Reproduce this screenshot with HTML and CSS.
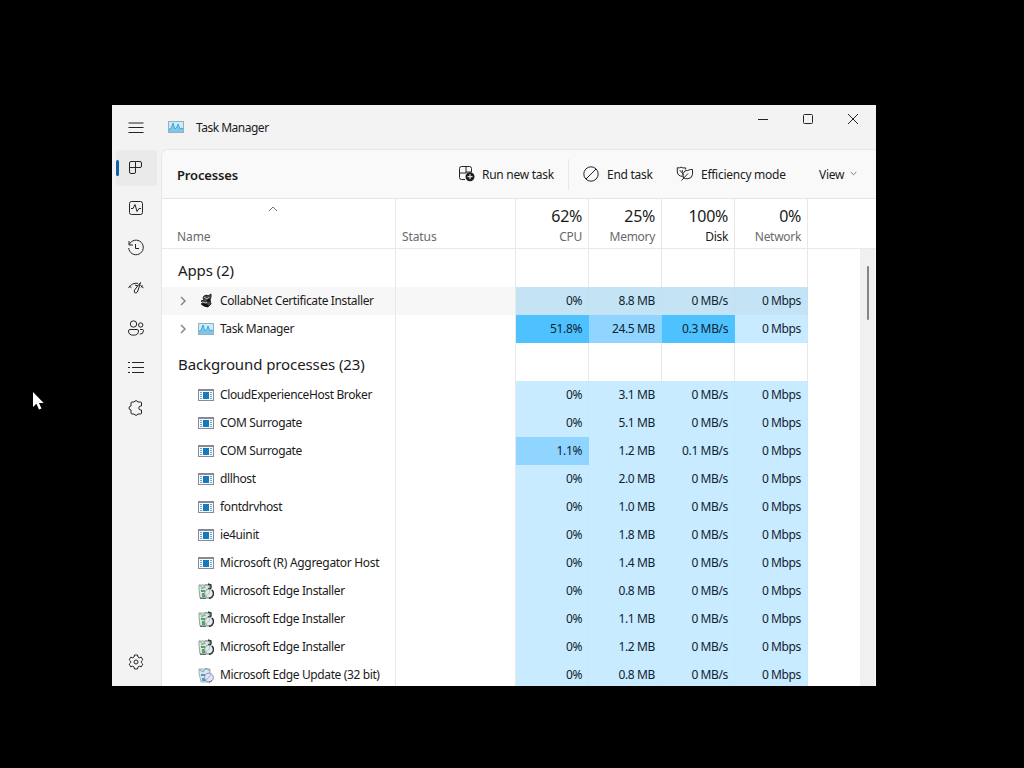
FILE: index.html
```html
<!DOCTYPE html>
<html lang="en">
<head>
<meta charset="utf-8">
<title>Task Manager</title>
<link rel="stylesheet" href="styles.css">
</head>
<body>
<svg class="defs" width="0" height="0" aria-hidden="true">
  <symbol id="tm" viewBox="0 0 16 14">
    <rect x=".5" y="1.5" width="15" height="11" fill="#c9edfc" stroke="#9aafba"/>
    <path d="M1 12V9l2-1 2-5 2 6 2-2 1-3 2 5 2-1 1 1v3z" fill="#7cc8ed"/>
    <path d="M1 9.500l2-1L5 3l2 6 2-2 1-3 2 5 2-1 1 1" fill="none" stroke="#3698cd" stroke-width=".8"/>
  </symbol>
  <symbol id="exe" viewBox="0 0 16 12">
    <path d="M0 0h16v12H0z" fill="#858b90"/><path d="M1 2h14v9H1z" fill="#f4fafd"/>
    <path d="M5 3h6v7H5z" fill="#1879b9"/>
    <path d="M2 3.500h2M2 5.500h2M2 7.500h2M2 9.500h2M12 3.500h2M12 5.500h2M12 7.500h2M12 9.500h2" stroke="#69a4cb"/>
  </symbol>
  <symbol id="inst" viewBox="0 0 16 16">
    <path d="M1 2h11v3l-1 10H2L1 6z" fill="#dce7e4" stroke="#7f908a" stroke-width=".8"/>
    <path d="M1 2l4 3 3-4 4 3M3 6l5-2" fill="none" stroke="#87a99a"/>
    <path d="M3 7h4v2H3zM4 10h3v4H4z" fill="#4da65e"/>
    <path d="M10 1l3 1v3l-3 1" fill="none" stroke="#26352f" stroke-width="1.400"/>
    <circle cx="11" cy="10.500" r="4.300" fill="#e5e8ef" stroke="#8c969a"/>
    <path d="M14 7a5 5 0 0 1-3 8.500" fill="none" stroke="#26312e" stroke-width="1.300"/>
    <path d="M8 13l3-3 1-3" fill="none" stroke="#b8c9c0"/><path d="M2 15.300h6" stroke="#46544e"/>
  </symbol>
  <symbol id="upd" viewBox="0 0 16 16">
    <path d="M1 2h11v3l-1 10H3L1 6z" fill="#d7e5f0" stroke="#8da2b4" stroke-width=".8"/>
    <path d="M1 2l4 3 3-4 4 3" fill="none" stroke="#7c9fb0"/>
    <path d="M3 7h4v2H3zM4 11h4v3H4z" fill="#4b9ac1"/>
    <circle cx="11" cy="10.500" r="4.400" fill="#dfe5f5" stroke="#8b93b4"/>
    <path d="M8 13l3-3 2-3" fill="none" stroke="#a0add2"/><path d="M14 13.500l-3 2" stroke="#616a82"/>
  </symbol>
  <symbol id="chev" viewBox="0 0 8 10"><path d="M2 1l4 4-4 4" fill="none" stroke="#888" stroke-width="1.500"/></symbol>
</svg>
<div class="window">
  <nav class="rail">
    <div class="nav"><svg width="16" height="12" viewBox="0 0 16 12"><path d="M.5 1h15M.5 5.500h15M.5 10.500h15"/></svg></div>
    <div class="nav active"><svg width="16" height="16" viewBox="0 0 16 16"><path d="M7.500 1.500H3A1.500 1.500 0 0 0 1.500 3v9A1.500 1.500 0 0 0 3 13.500h3A1.500 1.500 0 0 0 7.500 12zM1.500 7.500H12A1.500 1.500 0 0 0 13.500 6V3A1.500 1.500 0 0 0 12 1.500H7.500"/></svg></div>
    <div class="nav"><svg width="16" height="16" viewBox="0 0 16 16"><rect x="1.500" y="1.500" width="13" height="13" rx="2"/><path d="M3 8.500h2l2-4 2 7 2-3h2"/></svg></div>
    <div class="nav"><svg width="18" height="18" viewBox="0 0 18 18"><path d="M2 2v4h4M2.300 5.500A7.300 7.300 0 1 1 1.700 9M8.500 5v4.500H12"/></svg></div>
    <div class="nav"><svg width="18" height="16" viewBox="0 0 18 16"><path d="M1.500 8Q5 2.500 11 3.300M2.500 6.200l2 1.600M13.500 5l3 3.200M15.500 5.500l-1.500 2M13.500 2.500L7.500 10q-1 3 1.300 3 1.300 0 2-2zM8 5l3 1"/></svg></div>
    <div class="nav"><svg width="18" height="18" viewBox="0 0 18 18"><circle cx="6.500" cy="5" r="3.200"/><circle cx="13.700" cy="6" r="2.200"/><path d="M3 10.500h7a1.500 1.500 0 0 1 1.500 1.500q0 4.200-5 4.200t-5-4.200A1.500 1.500 0 0 1 3 10.500zM13 10.500h2.500a1 1 0 0 1 1 1q0 3.700-3.700 3.700"/></svg></div>
    <div class="nav"><svg width="18" height="14" viewBox="0 0 18 14"><path d="M5 1.500h12M5 6.500h12M5 11.500h12"/><path d="M1 1.500h2M1 6.500h2M1 11.500h2"/></svg></div>
    <div class="nav"><svg width="18" height="18" viewBox="0 0 18 18"><path d="M5 3h2.300a1.900 1.900 0 0 1 3.600 0h2.600a1 1 0 0 1 1 1v3h-.7a2 2 0 0 0 0 4h.7v3a1 1 0 0 1-1 1h-2.600a1.900 1.900 0 0 1-3.600 0H5a1 1 0 0 1-1-1v-3a2 2 0 0 1 0-4V4a1 1 0 0 1 1-1z" stroke-linejoin="round"/></svg></div>
    <div class="nav settings"><svg width="16" height="16" viewBox="0 0 16 16"><path d="M6.500 1h3l.5 2 1.300.8 2-.6 1.500 2.600L13.400 7.200v1.600l1.400 1.400-1.500 2.600-2-.6-1.300.8-.5 2h-3L6 13l-1.300-.8-2 .6-1.500-2.600 1.400-1.400V7.200L1.200 5.800l1.500-2.600 2 .6L6 3z" stroke-linejoin="round"/><circle cx="8" cy="8" r="2"/></svg></div>
  </nav>
  <div class="main">
    <header class="title">
      <svg width="16" height="14"><use href="#tm"/></svg><span class="t-title">Task Manager</span>
      <div class="controls">
        <svg width="12" height="12" viewBox="0 0 12 12"><path d="M1 6.500h10"/></svg>
        <svg width="12" height="12" viewBox="0 0 12 12"><rect x="1.500" y="1.500" width="9" height="9" rx="1"/></svg>
        <svg width="12" height="12" viewBox="0 0 12 12"><path d="M1 1l10 10M11 1L1 11"/></svg>
      </div>
    </header>
    <section class="panel">
      <div class="toolbar">
        <h1>Processes</h1>
        <button class="run"><svg width="18" height="18" viewBox="0 0 18 18"><path d="M7 14.500H3.500a2 2 0 0 1-2-2v-9a2 2 0 0 1 2-2h8a2 2 0 0 1 2 2V7M1.500 8H8M8 1.500V8M8 7h5.500"/><circle cx="12" cy="11.700" r="4.500" fill="#1c1c1c" stroke="none"/><path d="M9.500 11.700h5M12 9.200v5" stroke="#fff"/></svg><span>Run new task</span></button>
        <i class="sep"></i>
        <button class="end"><svg width="16" height="16" viewBox="0 0 16 16"><circle cx="8" cy="8" r="7.200"/><path d="M3 13L13 3"/></svg><span>End task</span></button>
        <button class="eff"><svg width="18" height="16" viewBox="0 0 18 16"><path d="M7 10.300Q1.800 10.500 1.300 6V1.700q2.200.7 3.700-.6 1.700 1.300 4.700.8v1.600M3.800 4.300l4 4.500M6.300 6.500V4M5.500 14.500L12 7.500M7.500 12Q5.300 7.500 9 4.800q2.500 0 4-.8 1.500-.8 3.500-.5v5q-.5 4-4.500 4.200-2.700.2-4.500-.7z"/></svg><span>Efficiency mode</span></button>
        <button class="view"><span>View</span><svg width="7" height="5" viewBox="0 0 7 5"><path d="M.7 1l2.800 2.700L6.300 1" stroke="#777"/></svg></button>
      </div>
      <div class="grid head">
        <div class="hname"><svg width="10" height="6" viewBox="0 0 10 6"><path d="M1 5l4-4 4 4"/></svg><span>Name</span></div>
        <div class="hstat">Status</div>
        <div class="h"><b>62%</b><span>CPU</span></div>
        <div class="h"><b>25%</b><span>Memory</span></div>
        <div class="h dark"><b>100%</b><span>Disk</span></div>
        <div class="h"><b>0%</b><span>Network</span></div>
      </div>
      <div class="body">
        <div class="rows">
          <div class="grid group"><div class="g">Apps (2)</div><div></div><div></div><div></div><div></div><div></div></div>
          <div class="grid row hover"><div class="n"><svg class="c" width="8" height="10"><use href="#chev"/></svg><svg class="ic" width="16" height="16" viewBox="0 0 16 16"><path d="M6 3l3-1 1 1 3-2v3l-1 3 1 4-3 3-4-1-3-2 2-1-2-2 3-1-1-2z" fill="#454b50"/><path d="M6 4l3 2 2-2M4 9l4 1 3-3" fill="none" stroke="#b2b8be"/><path d="M9 8l3-1M5 11l5 2" stroke="#090909" stroke-width="2"/></svg><span>CollabNet Certificate Installer</span></div><div></div><div class="v">0%</div><div class="v">8.8 MB</div><div class="v">0 MB/s</div><div class="v">0 Mbps</div></div>
          <div class="grid row"><div class="n"><svg class="c" width="8" height="10"><use href="#chev"/></svg><svg class="ic" width="16" height="14"><use href="#tm"/></svg><span>Task Manager</span></div><div></div><div class="v hi">51.8%</div><div class="v mid">24.5 MB</div><div class="v hi">0.3 MB/s</div><div class="v">0 Mbps</div></div>
          <div class="grid group"><div class="g bg">Background processes (23)</div><div></div><div></div><div></div><div></div><div></div></div>
          <div class="grid row"><div class="n"><i class="c"></i><svg class="ic" width="16" height="12"><use href="#exe"/></svg><span>CloudExperienceHost Broker</span></div><div></div><div class="v">0%</div><div class="v">3.1 MB</div><div class="v">0 MB/s</div><div class="v">0 Mbps</div></div>
          <div class="grid row"><div class="n"><i class="c"></i><svg class="ic" width="16" height="12"><use href="#exe"/></svg><span>COM Surrogate</span></div><div></div><div class="v">0%</div><div class="v">5.1 MB</div><div class="v">0 MB/s</div><div class="v">0 Mbps</div></div>
          <div class="grid row"><div class="n"><i class="c"></i><svg class="ic" width="16" height="12"><use href="#exe"/></svg><span>COM Surrogate</span></div><div></div><div class="v mid">1.1%</div><div class="v">1.2 MB</div><div class="v">0.1 MB/s</div><div class="v">0 Mbps</div></div>
          <div class="grid row"><div class="n"><i class="c"></i><svg class="ic" width="16" height="12"><use href="#exe"/></svg><span>dllhost</span></div><div></div><div class="v">0%</div><div class="v">2.0 MB</div><div class="v">0 MB/s</div><div class="v">0 Mbps</div></div>
          <div class="grid row"><div class="n"><i class="c"></i><svg class="ic" width="16" height="12"><use href="#exe"/></svg><span>fontdrvhost</span></div><div></div><div class="v">0%</div><div class="v">1.0 MB</div><div class="v">0 MB/s</div><div class="v">0 Mbps</div></div>
          <div class="grid row"><div class="n"><i class="c"></i><svg class="ic" width="16" height="12"><use href="#exe"/></svg><span>ie4uinit</span></div><div></div><div class="v">0%</div><div class="v">1.8 MB</div><div class="v">0 MB/s</div><div class="v">0 Mbps</div></div>
          <div class="grid row"><div class="n"><i class="c"></i><svg class="ic" width="16" height="12"><use href="#exe"/></svg><span class="wide">Microsoft (R) Aggregator Host</span></div><div></div><div class="v">0%</div><div class="v">1.4 MB</div><div class="v">0 MB/s</div><div class="v">0 Mbps</div></div>
          <div class="grid row"><div class="n"><i class="c"></i><svg class="ic" width="16" height="16"><use href="#inst"/></svg><span>Microsoft Edge Installer</span></div><div></div><div class="v">0%</div><div class="v">0.8 MB</div><div class="v">0 MB/s</div><div class="v">0 Mbps</div></div>
          <div class="grid row"><div class="n"><i class="c"></i><svg class="ic" width="16" height="16"><use href="#inst"/></svg><span>Microsoft Edge Installer</span></div><div></div><div class="v">0%</div><div class="v">1.1 MB</div><div class="v">0 MB/s</div><div class="v">0 Mbps</div></div>
          <div class="grid row"><div class="n"><i class="c"></i><svg class="ic" width="16" height="16"><use href="#inst"/></svg><span>Microsoft Edge Installer</span></div><div></div><div class="v">0%</div><div class="v">1.2 MB</div><div class="v">0 MB/s</div><div class="v">0 Mbps</div></div>
          <div class="grid row"><div class="n"><i class="c"></i><svg class="ic" width="16" height="16"><use href="#upd"/></svg><span>Microsoft Edge Update (32 bit)</span></div><div></div><div class="v">0%</div><div class="v">0.8 MB</div><div class="v">0 MB/s</div><div class="v">0 Mbps</div></div>
        </div>
        <div class="scroll"><div class="thumb"></div></div>
      </div>
    </section>
  </div>
</div>
<svg class="cursor" width="13" height="20" viewBox="0 0 13 20"><path d="M1 1v15l3.400-3.200L7 18.500l2.500-1.100L7 12h4.700z" fill="#fff"/></svg>
</body>
</html>
```
FILE: styles.css
```css
* { box-sizing: border-box; }
body { margin: 0; height: 768px; padding: 105px 0 0 112px; background: #000; overflow: hidden; font: 12px "Noto Sans", "Open Sans", sans-serif; color: #1b1b1b; letter-spacing: -.38px; }
svg { display: block; flex: none; fill: none; stroke: #242424; }
symbol, use { stroke: none; }
.defs { position: absolute; }
.window { display: flex; width: 764px; height: 581px; background: #f3f3f3; overflow: hidden; }
.rail { width: 49px; display: flex; flex-direction: column; padding: 3px 4px 4px; }
.nav { height: 40px; flex: none; display: flex; align-items: center; padding-left: 12px; }
.nav svg { margin-left: -1px; width: 18px; }
.nav.active { height: 36px; margin: 2px 0; background: #eaeaea; border-radius: 4px; padding-left: 0; }
.nav.active::before { content: ""; width: 3px; height: 16px; background: #1261ad; border-radius: 2px; margin-right: 9px; }
.nav.settings { margin-top: auto; }
.main { flex: 1; display: flex; flex-direction: column; min-width: 0; }
.title { height: 44px; display: flex; align-items: center; padding: 0 17px 0 7px; }
.t-title { margin-left: 12px; padding-bottom: 0; letter-spacing: -.5px; }
.controls { margin: -17px 0 0 auto; display: flex; gap: 33px; }
.panel { flex: 1; display: flex; flex-direction: column; min-height: 0; border: solid #e6e6e6; border-width: 1px 0 0 1px; border-top-left-radius: 7px; background: #fff; overflow: hidden; }
.toolbar { height: 49px; flex: none; background: #f9f9f9; border-bottom: 1px solid #e4e4e4; display: flex; align-items: center; padding: 1px 0 0 15px; }
h1 { margin: 0; width: 281px; font-size: 13px; font-weight: 600; letter-spacing: -.15px; }
button { border: 0; padding: 0; background: none; font: inherit; color: inherit; display: flex; align-items: center; white-space: nowrap; letter-spacing: -.27px; }
button svg { margin-top: -2px; }
.run { width: 110px; gap: 6px; flex: none; }
.sep { width: 1px; height: 31px; background: #e9e9e9; }
.end { width: 107px; padding-left: 14px; gap: 8px; flex: none; }
.eff { width: 143px; gap: 7px; flex: none; }
.view { gap: 6px; }
.grid { display: grid; grid-template-columns: 234px 120px repeat(4, 73px); }
.grid > div { border-right: 1px solid #e8e8e8; }
.head { height: 50px; flex: none; border-bottom: 1px solid #e9e9e9; color: #6a6a6a; letter-spacing: -.1px; }
.hname { display: flex; flex-direction: column; padding: 7px 0 0 15px; gap: 17px; line-height: 16px; }
.hname svg { margin-left: 91px; stroke: #777; }
.hstat { padding: 30px 0 0 6px; line-height: 16px; }
.h { display: flex; flex-direction: column; align-items: flex-end; padding: 6px 6px 0 0; line-height: 16px; letter-spacing: -.3px; }
.h b { font-size: 16px; font-weight: 400; color: #1b1b1b; line-height: 22px; margin-bottom: 2px; letter-spacing: -.3px; }
.dark span { color: #1b1b1b; }
.body { flex: 1; display: flex; min-height: 0; overflow: hidden; }
.rows { flex: 1; }
.group { height: 38px; }
.g { padding-left: 16px; font-size: 15px; line-height: 42px; letter-spacing: -.1px; white-space: nowrap; }
.row { height: 28px; }
.row > .v { background: #c9ebff; border-color: #c6e8fd; padding-right: 6px; text-align: right; line-height: 27px; color: #102333; }
.row > .mid { background: #8fd5ff; border-color: #8fd5ff; }
.row > .hi { background: #4ec1ff; border-color: #4ec1ff; }
.hover > div { background: #f7f7f7; }
.hover > .v { background: #c4e4f5; border-color: #bfe1f3; }
.n { display: flex; align-items: center; white-space: nowrap; }
.n span { padding-bottom: 1px; }
.wide { letter-spacing: -.3px; }
.c { width: 8px; margin: 0 11px 0 17px; }
.ic { margin-right: 6px; }
.scroll { width: 16px; background: #f0f0f0; border-right: 1px solid #fafafa; padding: 17px 0 0 7px; }
.thumb { width: 2px; height: 54px; background: #858585; border-radius: 1px; }
.cursor { position: absolute; left: 32px; top: 391px; stroke: none; }
```
